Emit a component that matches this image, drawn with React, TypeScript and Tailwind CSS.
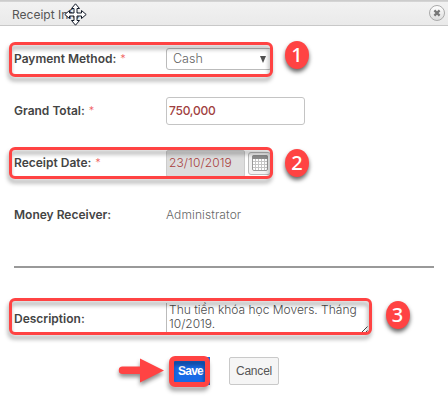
import type { ReactNode } from 'react';

function Frame({ className }: { className: string }) {
  return (
    <div
      className={`pointer-events-none absolute z-10 rounded-[6px] border-[#ff4343] drop-shadow-[-1px_4px_2px_rgba(0,0,0,0.36)] ${className}`}
    />
  );
}

function Badge({ n, className }: { n: number; className: string }) {
  return (
    <div
      className={`absolute z-20 flex h-7 w-6 items-center justify-center rounded-[50%] bg-[#ff4343] font-['Noto_Sans',sans-serif] text-[20px] leading-none font-medium text-white shadow-[0px_3px_4px_rgba(0,0,0,0.6)] ${className}`}
    >
      {n}
    </div>
  );
}

function Row({ label, required, children }: { label: string; required?: boolean; children: ReactNode }) {
  return (
    <div className="relative flex h-[52px] items-center pl-[14px]">
      <div className="w-[152px] shrink-0 text-[12px] font-semibold whitespace-nowrap text-[#444]">
        {label}
        {required && <span className="ml-1 text-[11px] font-light text-[#f05a5a]">*</span>}
      </div>
      {children}
    </div>
  );
}

function MoveCursor() {
  return (
    <svg className="absolute top-[2px] left-[64px]" width="23" height="23" viewBox="0 0 23 23">
      <path
        d="M11.5 .8 15.5 5.5H13V10H17.5V7.5L22.2 11.5 17.5 15.5V13H13V17.5H15.5L11.5 22.2 7.5 17.5H10V13H5.5V15.5L.8 11.5 5.5 7.5V10H10V5.5H7.5Z"
        fill="#fff"
        stroke="#111827"
        strokeWidth="1"
      />
    </svg>
  );
}

function CalendarIcon() {
  return (
    <svg width="16" height="16" viewBox="0 0 16 16">
      <rect x=".5" y=".5" width="15" height="15" rx="1.5" fill="#fff" stroke="#9a9a9a" />
      <path d="M0 4V2Q0 0 2 0H14Q16 0 16 2V4Z" fill="#8c8c8c" />
      <path d="M3.5 4V15M6.5 4V15M9.5 4V15M12.5 4V15M1 6.5H15M1 9.5H15M1 12.5H15" stroke="#c4c4c4" />
    </svg>
  );
}

export default function App() {
  return (
    <div className="h-[402px] w-[448px] overflow-hidden bg-white font-['Inter',sans-serif] text-[12px] text-[#666]">
      <header className="relative flex h-[26px] items-center justify-between border-t border-b border-t-[#ccc] border-b-[#c8c8c8] bg-linear-to-b from-[#f2f2f2] to-[#eaeaea] pr-[3px] pl-3 shadow-[inset_0_1px_0_#d4d4d4]">
        <span className="pt-[3px] text-[12px] text-[#555]">Receipt Info</span>
        <MoveCursor />
        <button className="flex size-4 items-center justify-center rounded-full border border-[#aaa] bg-linear-to-b from-white to-[#ddd]">
          <svg width="8" height="8" viewBox="0 0 8 8">
            <path d="M1.4 1.4 6.6 6.6M6.6 1.4 1.4 6.6" stroke="#777" strokeWidth="2.2" />
          </svg>
        </button>
      </header>

      <main className="pt-[7px]">
        <Row label="Payment Method:" required>
          <div className="flex h-[22px] w-[106px] items-center justify-between rounded-[3px] border border-[#bbb] pr-[5px] pl-[6px] text-[12.5px] font-light">
            <span>Cash</span>
            <svg width="6" height="7" viewBox="0 0 6 7">
              <path d="M0 0H6L3 7Z" fill="#505050" />
            </svg>
          </div>
          <Frame className="top-[9px] left-[9px] h-[35px] w-[264px] border-[3px]" />
          <Badge n={1} className="top-2 left-[285px]" />
        </Row>

        <Row label="Grand Total:" required>
          <div className="flex h-7 w-[139px] items-center rounded-[3px] border border-[#c4c4c4] pl-[2px] text-[12px] font-medium tracking-[-0.25px] text-[#a04040]">
            750,000
          </div>
        </Row>

        <Row label="Receipt Date:" required>
          <div className="flex h-[27px] w-[79px] items-center rounded-[2px] border border-[#ccc] bg-[#ddd] pl-[2px] text-[12px] font-light tracking-[0.1px] text-[#a83f3f]">
            23/10/2019
          </div>
          <div className="ml-[3px] flex h-[23px] w-[23px] items-center justify-center rounded-[3px] border border-[#bbb] bg-[#f3f3f3]">
            <CalendarIcon />
          </div>
          <Frame className="top-[10px] left-[9px] h-[32px] w-[264px] border-[3px]" />
          <Badge n={2} className="top-3 left-[285px]" />
        </Row>

        <Row label="Money Receiver:">
          <span className="font-light tracking-[0.1px]">Administrator</span>
        </Row>

        <hr className="mx-[14px] mt-[25px] mb-[25px] h-[2px] border-0 bg-[#999]" />

        <Row label="Description:">
          <div className="relative h-[32px] w-[204px] border-l border-[#bbb] pl-[2px] text-[12px] leading-[14px] font-light whitespace-nowrap text-[#4c4c4c]">
            Thu tiền khóa học Movers. Tháng
            <br />
            10/2019.
            <svg className="absolute right-[2px] bottom-0" width="9" height="9" viewBox="0 0 9 9">
              <path d="M.5 8.5 8.5.5M4.5 8.5 8.5 4.5" stroke="#444" />
            </svg>
          </div>
          <Frame className="top-[5px] left-[9px] h-[37px] w-[363px] border-[3px]" />
          <Badge n={3} className="top-2 left-[385.5px]" />
        </Row>

        <div className="relative mt-3 flex h-7 pl-[173px] font-['Liberation_Sans',sans-serif] text-[12px]">
          <svg className="absolute top-0 left-[118px] drop-shadow-[0_3px_2px_rgba(0,0,0,0.45)]" width="48" height="28" viewBox="0 0 48 28">
            <path d="M4.5 9.5H22V1.5L46 13.5 22 25.5V17H4.5A3.5 3.5 0 0 1 4.5 9.5Z" fill="#ff4343" />
          </svg>
          <button className="h-7 w-[37px] bg-[#176ae6] pr-[2px] font-bold tracking-[-0.8px] text-white">Save</button>
          <Frame className="top-[-1px] left-[169px] h-[31px] w-[41px] border-[5px]" />
          <button className="ml-[19px] h-7 w-[50px] rounded-[2px] border border-[#c9c9c9] bg-[#f5f5f5] tracking-[-0.2px] text-[#555]">Cancel</button>
        </div>
      </main>
    </div>
  );
}
